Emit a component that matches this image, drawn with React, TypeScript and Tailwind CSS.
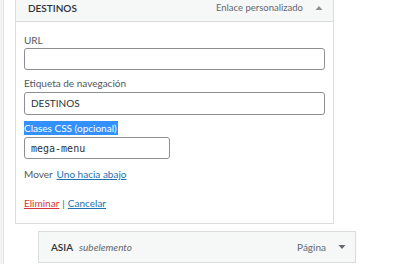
import React from "react";

export default function App() {
  const font = { fontFamily: 'Lato, "Open Sans", sans-serif' };
  return (
    <div className="w-[400px] h-[264px] bg-white overflow-hidden flex" style={font}>
      <div className="w-[4px] h-full bg-[#f3f3f3] border-r border-[#e2e2e2]" />
      <div className="flex flex-col pl-[11px]">
        <div className="w-[319px] border-x border-b border-[#dcdcde] bg-white">
          <div className="h-[22px] bg-[#f6f7f7] border-b border-[#dcdcde] flex items-start pt-[1px] pl-[12px] pr-[10px]">
            <span className="text-[10px] leading-[14px] font-semibold text-[#2c3338]">DESTINOS</span>
            <span className="ml-auto text-[9.5px] leading-[14px] text-[#646970]">Enlace personalizado</span>
            <svg width="8" height="6" viewBox="0 0 8 6" className="ml-[12px] mt-[4px]">
              <path d="M0.5 5 L4 1 L7.5 5 Z" fill="#8c8f94" />
            </svg>
          </div>
          <div className="pl-[8px] pr-[7px] pt-[11px] pb-[13px] flex flex-col">
            <label className="text-[10px] leading-[14px] text-[#50575e]">URL</label>
            <div className="mt-[1px] h-[22px] w-[301px] border border-[#8c8f94] rounded-[3px] bg-white" />
            <label className="mt-[6px] text-[10px] leading-[14px] text-[#50575e]">Etiqueta de navegación</label>
            <div className="mt-[2px] h-[23px] w-[301px] border border-[#8c8f94] rounded-[3px] bg-white flex items-center pl-[6px] text-[10px] text-[#2c3338]">
              DESTINOS
            </div>
            <div className="mt-[6px] flex">
              <span className="bg-[#3390ff] text-white text-[10px] leading-[14px] pr-[1px]">Clases CSS (opcional)</span>
            </div>
            <div
              className="mt-[2px] h-[22px] w-[146px] border border-[#8c8f94] rounded-[3px] bg-white flex items-center pl-[6px] text-[10px] text-[#2c3338]"
              style={{ fontFamily: '"DejaVu Sans Mono", "Liberation Mono", monospace' }}
            >
              mega-menu
            </div>
            <div className="mt-[8px] text-[10px] leading-[14px] text-[#50575e] flex gap-[4px]">
              <span>Mover</span>
              <span className="text-[#2271b1] underline">Uno hacia abajo</span>
            </div>
            <div className="mt-[15px] text-[10px] leading-[14px] text-[#50575e] flex gap-[3px]">
              <span className="text-[#d63638] underline">Eliminar</span>
              <span>|</span>
              <span className="text-[#2271b1] underline">Cancelar</span>
            </div>
          </div>
        </div>
        <div className="mt-[7px] ml-[23px] w-[318px] h-[32px] bg-[#f6f7f7] border border-[#dcdcde] flex items-center pl-[12px] pr-[9px]">
          <span className="text-[10px] font-semibold text-[#2c3338]">ASIA</span>
          <span className="ml-[6px] text-[10px] italic text-[#646970]">subelemento</span>
          <span className="ml-auto text-[10px] text-[#646970]">Página</span>
          <svg width="8" height="6" viewBox="0 0 8 6" className="ml-[12px]">
            <path d="M0.5 1 L4 5 L7.5 1 Z" fill="#646970" />
          </svg>
        </div>
      </div>
    </div>
  );
}
